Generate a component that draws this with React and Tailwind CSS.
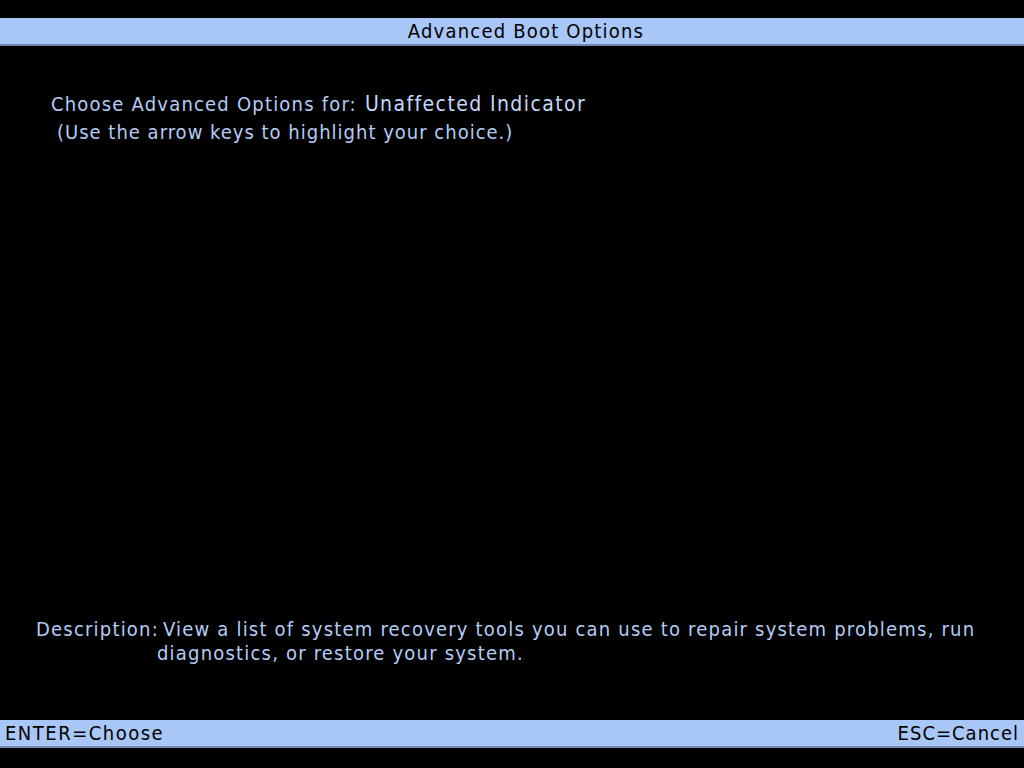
import React from 'react';

const font = { fontFamily: '"Liberation Sans Narrow", "DejaVu Sans Condensed", "Liberation Sans", sans-serif' };

const App = () => {
  return (
    <div className="w-[1024px] h-[768px] bg-black flex flex-col text-[#b4ccf4] overflow-hidden" style={font}>
      <div className="mt-[18px] h-[28px] bg-[#a8c6f6] border-b-2 border-[#6f88b0] flex items-center justify-center pl-[28px] text-black text-[20px] tracking-[1.2px] leading-none">
        Advanced Boot Options
      </div>

      <div className="pl-[51px] pt-[44px] text-[20px] leading-[28px]">
        <div className="flex items-baseline tracking-[1.2px]">
          <span>Choose Advanced Options for:</span>
          <span className="ml-[8px] text-[21px] tracking-[1.4px] text-[#c4d8fa]">Unaffected Indicator</span>
        </div>
        <div className="pl-[6px] tracking-[1px]">(Use the arrow keys to highlight your choice.)</div>
      </div>

      <div className="flex-1" />

      <div className="pl-[36px] pr-[30px] text-[20px] leading-[24px] tracking-[1.2px] flex">
        <span className="shrink-0">Description:</span>
        <span className="-ml-[2px] indent-[6px]">
          View a list of system recovery tools you can use to repair system problems, run diagnostics, or restore your system.
        </span>
      </div>

      <div className="mt-[55px] mb-[20px] h-[28px] bg-[#a8c6f6] border-b-2 border-[#6f88b0] flex items-center justify-between px-[5px] text-black text-[20px] leading-none">
        <span className="tracking-[1.5px]">ENTER=Choose</span>
        <span className="tracking-[1px]">ESC=Cancel</span>
      </div>
    </div>
  );
};

export default App;
